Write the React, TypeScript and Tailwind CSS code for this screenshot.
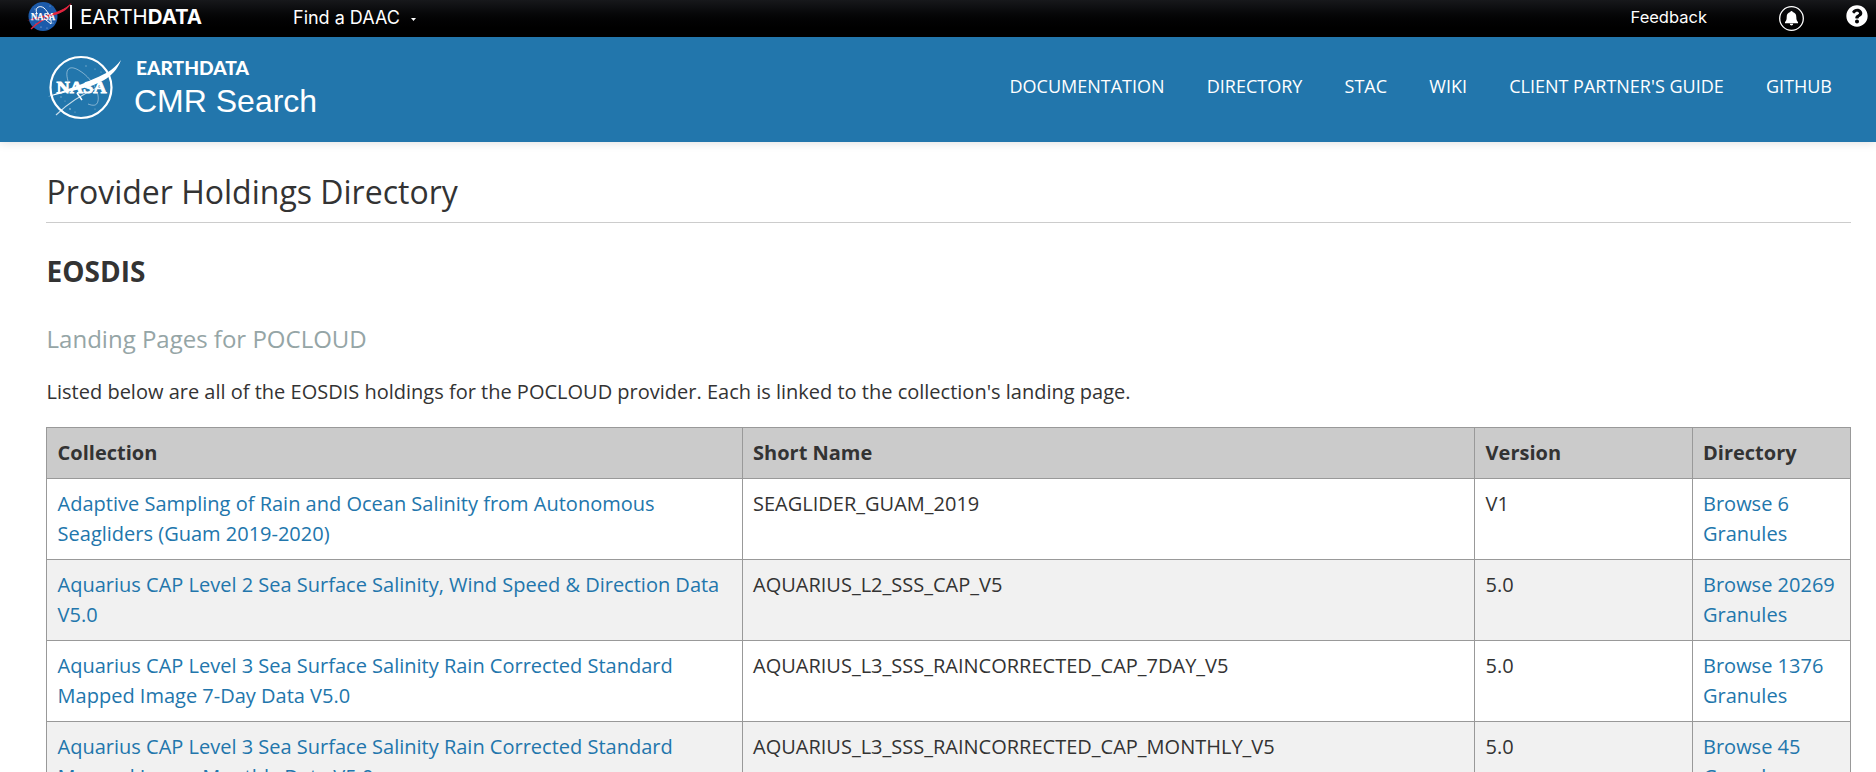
import React from "react";

const rows = [
  ["Adaptive Sampling of Rain and Ocean Salinity from Autonomous Seagliders (Guam 2019-2020)", "SEAGLIDER_GUAM_2019", "V1", "6"],
  ["Aquarius CAP Level 2 Sea Surface Salinity, Wind Speed & Direction Data V5.0", "AQUARIUS_L2_SSS_CAP_V5", "5.0", "20269"],
  ["Aquarius CAP Level 3 Sea Surface Salinity Rain Corrected Standard Mapped Image 7-Day Data V5.0", "AQUARIUS_L3_SSS_RAINCORRECTED_CAP_7DAY_V5", "5.0", "1376"],
  ["Aquarius CAP Level 3 Sea Surface Salinity Rain Corrected Standard Mapped Image Monthly Data V5.0", "AQUARIUS_L3_SSS_RAINCORRECTED_CAP_MONTHLY_V5", "5.0", "45"],
];

const links = ["DOCUMENTATION", "DIRECTORY", "STAC", "WIKI", "CLIENT PARTNER'S GUIDE", "GITHUB"];

function Meatball() {
  return (
    <svg width="46" height="32" viewBox="0 0 46 32" className="shrink-0">
      <circle cx="16" cy="16.5" r="14.5" fill="#1c5bab" />
      <g fill="#fff" opacity="0.7">
        <circle cx="8" cy="9" r="0.5" /><circle cx="23" cy="6" r="0.5" /><circle cx="9" cy="24" r="0.5" />
        <circle cx="14" cy="27" r="0.6" /><circle cx="20" cy="28" r="0.5" /><circle cx="26" cy="23" r="0.5" />
      </g>
      <path d="M44.500 3C38 15 23 16 14 18C9 19 4 20 0 20.500C12 16 36 13 44.500 3Z" fill="#e0243f" />
      <path d="M4 29C11 22 17 19 30 13" fill="none" stroke="#e0243f" strokeWidth="1.200" />
      <text x="16" y="19.800" textAnchor="middle" textLength="24" lengthAdjust="spacingAndGlyphs" fontFamily="Liberation Serif, serif" fontWeight="bold" fontSize="9.500" fill="#fff" stroke="#fff" strokeWidth="0.250">NASA</text>
      <path d="M10 14C7 7 13 5 17 8C21 12 25 18 24 24L19 20" fill="none" stroke="#fff" strokeWidth="1" />
      <path d="M44.500 3C39 11 32 14 22 16C31 12 38 9 44.500 3Z" fill="#e0243f" />
    </svg>
  );
}

function Insignia() {
  return (
    <svg width="74" height="66" viewBox="0 0 74 66" className="shrink-0">
      <circle cx="33" cy="32.500" r="30.5" fill="none" stroke="#fff" strokeWidth="2.200" />
      <path d="M20 26C16 12 23 10 32 16C42 22 52 36 50 46C49 51 45 51 40 49" fill="none" stroke="#fff" strokeWidth="0.8" opacity="0.55" />
      <g fill="#fff" opacity="0.45">
        <circle cx="38" cy="11" r="0.7" /><circle cx="47" cy="14" r="0.6" /><circle cx="53" cy="17" r="0.6" /><circle cx="13" cy="42" r="0.7" />
        <circle cx="22" cy="54" r="0.9" /><circle cx="17" cy="46" r="0.6" /><circle cx="47" cy="54" r="0.6" /><circle cx="27" cy="57" r="0.6" />
      </g>
      <text x="33.5" y="38" textAnchor="middle" textLength="50" lengthAdjust="spacingAndGlyphs" fontFamily="Liberation Serif, serif" fontWeight="bold" fontSize="16" fill="#fff" stroke="#fff" strokeWidth="0.8">NASA</text>
      <path d="M73 5C66 24 49 30 28 35C18 37 8 40 0 41.500C14 36 30 31 41 26C55 20 65 16 73 5Z" fill="#fff" />
      <path d="M8 60C18 50 32 40 53 31" fill="none" stroke="#fff" strokeWidth="1.200" opacity="0.75" />
      <path d="M29 38L34 45" stroke="#fff" strokeWidth="1.500" />
    </svg>
  );
}

function Logo() {
  return (
    <div className="flex pt-[18px]">
      <Insignia />
      <div className="ml-[12px] flex flex-col whitespace-nowrap">
        <span className="pl-[2px] font-['Lato',sans-serif] text-[19.2px] leading-[26px] font-black">EARTHDATA</span>
        <span className="mt-px font-['Liberation_Sans',sans-serif] text-[32px] leading-[38px]">CMR Search</span>
      </div>
    </div>
  );
}

export default function App() {
  return (
    <div className="h-[772px] overflow-hidden bg-white font-['Open_Sans',sans-serif] text-[20px] leading-[30px] text-[#333]">
      <div className="flex h-[37px] items-start bg-linear-to-b from-[#17181b] to-black font-['Inter',sans-serif] text-[18px] leading-[36px] text-white">
        <div className="flex w-[293px] items-start pl-[27px]">
          <Meatball />
          <div className="mt-[5px] mr-[8px] -ml-[3px] h-[24px] w-[2px] bg-white" />
          <div className="text-[20.4px] leading-[34px] whitespace-nowrap">EARTH<b>DATA</b></div>
        </div>
        <div className="flex items-center">
          Find a DAAC
          <svg width="5" height="4" viewBox="0 0 5 4" className="mt-[3px] ml-[11px]"><path d="M0 0H5L2.5 3Z" fill="#fff" /></svg>
        </div>
        <div className="ml-auto text-[16.5px] leading-[35px]">Feedback</div>
        <svg width="26" height="26" viewBox="0 0 26 26" className="mt-[5px] ml-[72px]">
          <circle cx="12.500" cy="13.5" r="11.8" fill="none" stroke="#fff" strokeWidth="1.3" />
          <path d="M12.500 6a1.2 1.2 0 0 1 1.2 1.1c2.4.6 3.6 2.4 3.6 4.8 0 3 .7 4 1.7 5v1.3H6v-1.300c1-1 1.700-2 1.700-5 0-2.400 1.200-4.200 3.600-4.800A1.200 1.200 0 0 1 12.500 6ZM10.800 18.800h3.400a1.700 1.700 0 0 1-3.400 0Z" fill="#fff" />
        </svg>
        <svg width="22" height="22" viewBox="0 0 512 512" className="mt-[5px] mr-[8px] ml-[41px]">
          <path fill="#fff" d="M504 256c0 136.997-111.043 248-248 248S8 392.997 8 256C8 119.083 119.043 8 256 8s248 111.083 248 248zM262.655 90c-54.497 0-89.255 22.957-116.549 63.758-3.536 5.286-2.353 12.415 2.715 16.258l34.699 26.310c5.205 3.947 12.621 3.008 16.665-2.122 17.864-22.658 30.113-35.797 57.303-35.797 20.429 0 45.698 13.148 45.698 32.958 0 14.976-12.363 22.667-32.534 33.976C247.128 238.528 216 254.941 216 296v4c0 6.627 5.373 12 12 12h56c6.627 0 12-5.373 12-12v-1.333c0-28.462 83.186-29.647 83.186-106.667 0-58.002-60.165-102-116.531-102zM256 338c-25.365 0-46 20.635-46 46 0 25.364 20.635 46 46 46s46-20.636 46-46c0-25.365-20.635-46-46-46z" />
        </svg>
      </div>

      <header className="flex h-[105px] bg-[#2276ac] pr-[44px] pl-[48px] text-white shadow-[0_0_10px_rgba(0,0,0,0.15)]">
        <Logo />
        <nav className="ml-auto flex gap-[42.2px] pt-[34px] text-[18px] leading-[30px] whitespace-nowrap">
          {links.map((l) => <a key={l}>{l}</a>)}
        </nav>
      </header>

      <main className="pr-[25px] pl-[46px]">
        <h1 className="border-b border-[#ccc] pt-[26px] pb-[6px] pl-[0.6px] text-[32px] leading-[48px]">Provider Holdings Directory</h1>
        <h2 className="mt-[27px] pl-[0.6px] text-[28px] leading-[42px] font-bold">EOSDIS</h2>
        <h3 className="mt-[29px] pl-[0.6px] text-[24px] leading-[36px] text-[#95a5a6]">Landing Pages for POCLOUD</h3>
        <p className="mt-[20px] pl-[0.6px]">Listed below are all of the EOSDIS holdings for the POCLOUD provider. Each is linked to the collection's landing page.</p>
        <table className="mt-[20px] w-[1805px] table-fixed border-collapse text-left">
          <colgroup>
            <col className="w-[696px]" /><col className="w-[732px]" /><col className="w-[218px]" /><col className="w-[158px]" />
          </colgroup>
          <thead>
            <tr className="bg-[#cbcbcb]">
              {["Collection", "Short Name", "Version", "Directory"].map((h) => (
                <th key={h} className="border border-[#999] p-[10px] font-bold odd:pl-[10.6px] ">{h}</th>
              ))}
            </tr>
          </thead>
          <tbody>
            {rows.map(([name, short, version, count]) => (
              <tr key={short} className="align-top even:bg-[#f1f1f1]">
                <td className="border border-[#999] p-[10px] pl-[10.6px] text-[#2276ac]">{name}</td>
                <td className="border border-[#999] p-[10px]">{short}</td>
                <td className="border border-[#999] p-[10px] pl-[10.6px]">{version}</td>
                <td className="border border-[#999] p-[10px] text-[#2276ac]">Browse {count}<br />Granules</td>
              </tr>
            ))}
          </tbody>
        </table>
      </main>
    </div>
  );
}
